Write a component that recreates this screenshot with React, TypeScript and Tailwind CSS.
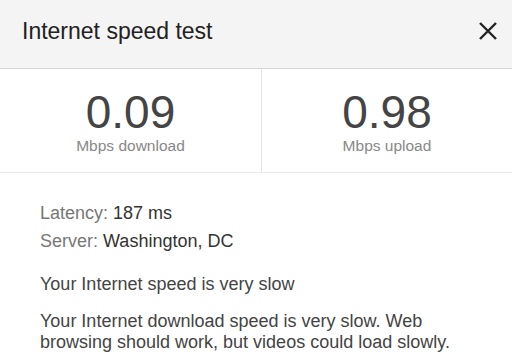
export default function App() {
  return (
    <div className="w-[512px] h-[364px] overflow-hidden bg-white font-['Liberation_Sans',Arial,sans-serif]">
      <header className="flex h-[69px] items-center justify-between border-b border-[#d6d6d6] bg-[#f4f4f4] pb-[6px] pl-[22px] pr-[12px]">
        <h1 className="text-[23px] text-[#222]">Internet speed test</h1>
        <button aria-label="Close" className="flex h-[24px] w-[24px] items-center justify-center">
          <svg width="18" height="18" viewBox="0 0 18 18" stroke="#222" strokeWidth="2.4">
            <path d="M1 1L17 17M17 1L1 17" />
          </svg>
        </button>
      </header>

      <div className="grid h-[104px] grid-cols-[262px_1fr] border-b border-[#ececec]">
        <Stat value="0.09" label="Mbps download" divider />
        <Stat value="0.98" label="Mbps upload" />
      </div>

      <div className="px-[40px] pt-[26px] text-[18px] text-[#555]">
        <p className="leading-[28px]">
          <span className="text-[#777]">Latency:</span> <span className="text-[#333]">187 ms</span>
        </p>
        <p className="leading-[28px]">
          <span className="text-[#777]">Server:</span> <span className="text-[#333]">Washington, DC</span>
        </p>
        <p className="mt-[18px] leading-[22px] text-[#444]">Your Internet speed is very slow</p>
        <p className="mt-[16px] leading-[21px] text-[#444]">
          Your Internet download speed is very slow. Web browsing should work, but videos could load slowly.
        </p>
      </div>
    </div>
  );
}

function Stat({ value, label, divider }: { value: string; label: string; divider?: boolean }) {
  return (
    <div className={`flex flex-col items-center pt-[18px] ${divider ? "border-r border-[#e4e4e4]" : ""}`}>
      <div className="text-[46px] leading-[50px] text-[#444]">{value}</div>
      <div className="text-[15.5px] leading-[18px] text-[#888]">{label}</div>
    </div>
  );
}
